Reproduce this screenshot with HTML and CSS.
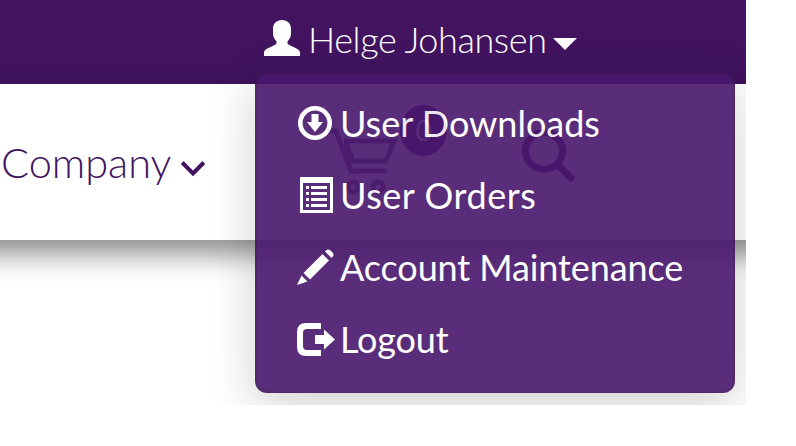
FILE: index.html
```
<!DOCTYPE html>
<html lang="en">
<head>
    <meta charset="UTF-8">
    <meta name="viewport" content="width=device-width, initial-scale=1.0">
    <title>User Menu</title>
    <link rel="stylesheet" href="styles.css">
</head>
<body>
    <div class="page">
        <!-- Top bar -->
        <header class="topbar">
            <a class="user-toggle">
                <svg class="icon-user" viewBox="0 0 36 36"><path d="M18 0C23.500 0 27 3.500 27 9V14C27 17 25 20 23.500 21.500V23.500C25 26 35 28 36 32V36H0V32C1 28 11 26 12.500 23.500V21.500C11 20 9 17 9 14V9C9 3.500 12.500 0 18 0Z"/></svg>
                <span class="user-name">Helge Johansen</span>
                <svg class="caret" viewBox="0 0 24 12"><path d="M0 0H24L12 12Z"/></svg>
            </a>
        </header>

        <!-- Main navigation -->
        <nav class="navbar">
            <a class="nav-link">
                <span class="nav-label">Company</span>
                <svg class="chevron" viewBox="0 0 24 18"><path d="M1.200 2.500L12 13.500L22.800 2.500"/></svg>
            </a>
            <a class="cart">
                <svg class="icon-cart" viewBox="0 0 70 68"><path d="M0 3H8L23 43H59M16 13H66L58 33H25L18 15"/><circle cx="25" cy="59" r="5"/><circle cx="50" cy="59" r="5"/></svg>
                <span class="badge">0</span>
            </a>
            <svg class="icon-search" viewBox="0 0 56 56"><circle cx="22" cy="22" r="18.500"/><path d="M36 36L49 49"/></svg>
        </nav>

        <!-- User dropdown -->
        <ul class="dropdown">
            <li>
                <svg class="icon" viewBox="0 0 38 38"><circle class="ring" cx="18" cy="18" r="14.700"/><path d="M14.500 9H21.500V17H26L18 27L10 17H14.500Z"/></svg>
                <span class="item-label">User Downloads</span>
            </li>
            <li>
                <svg class="icon" viewBox="0 0 38 38"><path fill-rule="evenodd" d="M3 0H36V36H3ZM6 6V33H33V6Z"/><path d="M9 9h3v3H9zM14 9h16v3H14zM9 15h3v3H9zM14 15h16v3H14zM9 21h3v3H9zM14 21h16v3H14zM9 27h3v3H9zM14 27h16v3H14z"/></svg>
                <span class="item-label orders">User Orders</span>
            </li>
            <li>
                <svg class="icon" viewBox="0 0 38 38"><path d="M28 2.500Q30.500 -1 33.500 1.500L35.500 3.500Q38 6 34.500 9ZM25.500 5L32 11.500L13 30.500L6.500 24ZM4.500 26.500L10.500 32.500L0 36Z"/></svg>
                <span class="item-label account">Account Maintenance</span>
            </li>
            <li>
                <svg class="icon" viewBox="0 0 38 38"><path d="M24 2H9Q0 2 0 11V26Q0 35 9 35H24V29H10Q6 29 6 25V12Q6 8 10 8H24ZM27 8.500L38 18.500L27 28.500V23H18V14H27Z"/></svg>
                <span class="item-label logout">Logout</span>
            </li>
        </ul>
    </div>
</body>
</html>
```
FILE: styles.css
```
* {
    margin: 0;
    padding: 0;
    box-sizing: border-box;
}

body {
    font-family: 'Lato', sans-serif;
    background: #fff;
}

.page {
    position: relative;
    width: 746px;
    height: 405px;
    overflow: hidden;
}

.topbar {
    height: 84px;
    padding: 20px 0 0 264px;
    background: #421460;
    color: #fff;
}

.user-toggle {
    display: flex;
    align-items: flex-start;
    height: 44px;
    line-height: 39px;
    font-size: 36px;
    font-weight: 300;
    letter-spacing: -0.4px;
    white-space: nowrap;
}

.icon-user {
    width: 36px;
    height: 36px;
    margin-right: 8px;
    fill: #fff;
}

.user-name {
    width: 245px;
}

.caret {
    width: 24px;
    height: 12px;
    margin-top: 18px;
    fill: #fff;
}

.navbar {
    display: flex;
    align-items: flex-start;
    height: 156px;
    margin: 0 -50px;
    padding: 0 50px;
    background: #fff;
    box-shadow: 0 14px 26px rgba(0, 0, 0, 0.45);
    color: #421460;
}

.nav-link {
    display: flex;
    width: 328px;
    padding: 52px 0 0 1px;
    line-height: 52px;
    font-size: 41.5px;
    font-weight: 300;
}

.nav-label {
    width: 180px;
}

.chevron {
    width: 24px;
    height: 18px;
    margin-top: 24px;
    fill: none;
    stroke: #421460;
    stroke-width: 4;
}

.cart {
    position: relative;
    width: 194px;
    padding-top: 44px;
}

.icon-cart {
    width: 70px;
    height: 68px;
    fill: none;
    stroke: #421460;
    stroke-width: 5;
    opacity: 0.8;
}

.badge {
    position: absolute;
    top: 21px;
    left: 72px;
    width: 47px;
    height: 51px;
    border-radius: 50%;
    background: #421460;
    color: #fff;
    font-size: 28px;
    line-height: 51px;
    text-align: center;
}

.icon-search {
    width: 56px;
    height: 56px;
    margin-top: 45px;
    fill: none;
    stroke: #421460;
    stroke-width: 7;
    stroke-linecap: round;
}

.dropdown {
    position: absolute;
    top: 72px;
    left: 255px;
    width: 480px;
    height: 321px;
    padding: 14px 40px;
    list-style: none;
    background: #49176d;
    border: 2px solid rgba(0, 0, 0, 0.15);
    border-radius: 12px;
    box-shadow: 0 12px 48px rgba(0, 0, 0, 0.2);
    opacity: 0.9;
    color: #fff;
}

.dropdown li {
    display: flex;
    align-items: center;
    height: 72px;
    font-size: 36px;
    white-space: nowrap;
}

.icon {
    width: 38px;
    height: 38px;
    margin-right: 5px;
    fill: #fff;
}

.item-label {
    height: 72px;
    line-height: 70px;
}

.orders {
    letter-spacing: 0.55px;
}

.account {
    letter-spacing: -0.1px;
}

.logout {
    letter-spacing: -0.15px;
}

.ring {
    fill: none;
    stroke: #fff;
    stroke-width: 4.6;
}
```
